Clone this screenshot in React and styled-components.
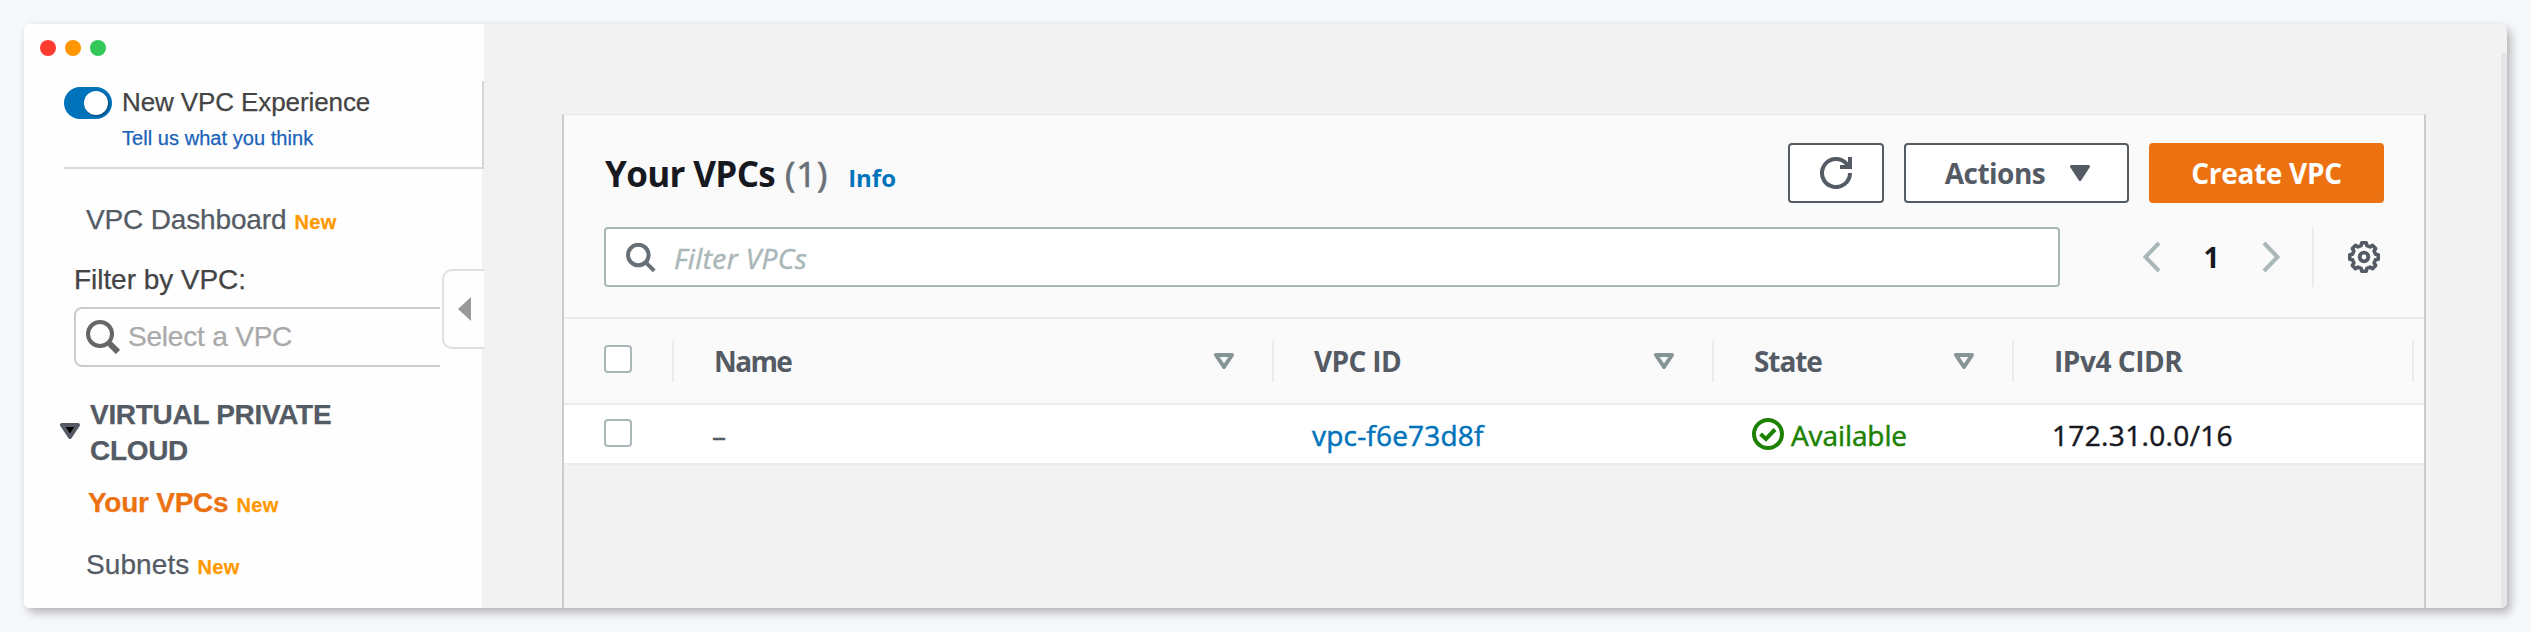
import React from 'react';
import styled, { createGlobalStyle, css } from 'styled-components';

const ember = '"Open Sans", "Noto Sans", sans-serif';
const helvetica = '"Liberation Sans", Arial, sans-serif';

const GlobalStyle = createGlobalStyle`
  * { box-sizing: border-box; }
  body { margin: 0; background: #f7f8fb; }
  button { font: inherit; }
  svg { display: block; flex: none; }
`;

const Page = styled.div`
  height: 632px;
  padding: 24px;
  overflow: hidden;
  background: #f7f8fb;
`;

const Window = styled.div`
  display: flex;
  width: 2483px;
  height: 584px;
  border-radius: 6px;
  background: #f2f2f2;
  box-shadow: 4px 5px 10px rgba(0, 0, 0, 0.26), 0 0 6px rgba(0, 0, 0, 0.04);
`;

/* ---------- sidebar ---------- */

const Sidebar = styled.aside`
  position: relative;
  width: 458px;
  flex: none;
  background: #fefefe;
  border-radius: 6px 0 0 6px;
  font-family: ${helvetica};
  color: #545b64;
  -webkit-text-stroke: 0.25px;
`;

const TitleBar = styled.div`
  display: flex;
  gap: 9px;
  width: 460px;
  height: 57px;
  padding: 16px 0 0 16px;
  background: #fefefe;
  border-top-left-radius: 6px;
`;

const Dot = styled.span`
  width: 16px;
  height: 16px;
  border-radius: 50%;
  background: ${(p) => p.$color};
`;

const Experience = styled.div`
  display: flex;
  gap: 10px;
  width: 420px;
  height: 88px;
  margin-left: 40px;
  padding-top: 6px;
  background: #fefefe;
  border-right: 2px solid #d5d5d5;
  border-bottom: 2px solid #d9d9d9;
`;

const Toggle = styled.span`
  display: flex;
  justify-content: flex-end;
  width: 48px;
  height: 32px;
  padding: 4px;
  border-radius: 16px;
  background: #0073bb;
`;

const Knob = styled.span`
  width: 24px;
  height: 24px;
  border-radius: 50%;
  background: #fff;
  box-shadow: 1px 1px 2px rgba(0, 0, 0, 0.45);
`;

const ExperienceTitle = styled.div`
  font-size: 26px;
  line-height: 30px;
  letter-spacing: -0.1px;
  color: #444;
`;

const FeedbackLink = styled.div`
  margin-top: 9px;
  font-size: 20px;
  line-height: 24px;
  letter-spacing: 0.05px;
  color: #1a62b8;
`;

const SidebarItem = styled.div`
  display: flex;
  align-items: baseline;
  gap: 8px;
  height: 36px;
  margin-top: ${(p) => p.$top}px;
  padding-left: 62px;
  font-size: 28px;
  line-height: 36px;
  letter-spacing: ${(p) => p.$tracking || 0}px;
  ${(p) =>
    p.$active &&
    css`
      padding-left: 64px;
      font-weight: 700;
      color: #ec7211;
    `}
`;

const NewTag = styled.span`
  font-size: 20px;
  font-weight: 700;
  letter-spacing: 0.4px;
  color: #ff9900;
`;

const FilterLabel = styled.div`
  margin: 24px 0 9px 50px;
  font-size: 28px;
  line-height: 36px;
  letter-spacing: -0.05px;
  color: #444;
`;

const VpcSelect = styled.div`
  display: flex;
  align-items: center;
  gap: 8px;
  width: 366px;
  height: 60px;
  margin-left: 50px;
  padding-left: 10px;
  border: 2px solid #ccc;
  border-right: 0;
  border-radius: 8px 0 0 8px;
  font-size: 28px;
  line-height: 36px;
  letter-spacing: -0.2px;
  color: #aaa;
`;

const Group = styled.div`
  display: flex;
  align-items: center;
  gap: 10px;
  margin-top: 30px;
  padding-left: 36px;
`;

const GroupTitle = styled.div`
  width: 260px;
  font-size: 28px;
  font-weight: 700;
  line-height: 36px;
  letter-spacing: -0.3px;
`;

const CollapseTab = styled.div`
  position: absolute;
  top: 245px;
  right: -2px;
  display: flex;
  align-items: center;
  width: 42px;
  height: 80px;
  padding-left: 14px;
  background: #fefefe;
  border: 2px solid #e0e0e0;
  border-right: 0;
  border-radius: 10px 0 0 10px;
`;

/* ---------- main area ---------- */

const Main = styled.main`
  flex: 1;
  display: flex;
  padding: 90px 75px 0 80px;
  font-family: ${ember};
  font-size: 28px;
  line-height: 36px;
`;

const ScrollTrack = styled.div`
  width: 6px;
  margin-top: 29px;
  background: #e4e6e7;
  border-bottom-right-radius: 6px;
`;

const Panel = styled.section`
  flex: 1;
  border: 2px solid #c9cdd1;
  border-top: 1px solid #e4e7ea;
  border-bottom: 0;
`;

const PanelHeader = styled.header`
  display: flex;
  flex-direction: column;
  gap: 24px;
  height: 204px;
  padding: 28px 40px 0;
  background: #fafafa;
  border-bottom: 2px solid #eaeded;
`;

const HeaderRow = styled.div`
  display: flex;
  align-items: center;
  height: 60px;
`;

const Heading = styled.h2`
  display: flex;
  align-items: baseline;
  flex: 1;
  margin: 0;
  padding: 5px 0 0 1px;
  font-size: 35px;
  line-height: 48px;
  letter-spacing: -0.65px;
  color: #16191f;
`;

const Count = styled.span`
  margin-left: 10px;
  font-weight: 400;
  letter-spacing: 0.8px;
  color: #687078;
  -webkit-text-stroke: 0.7px;
`;

const InfoLink = styled.span`
  margin-left: 20px;
  font-size: 24px;
  letter-spacing: 0;
  color: #0073bb;
`;

const Button = styled.button`
  display: flex;
  align-items: center;
  justify-content: center;
  gap: 25px;
  width: ${(p) => p.$width}px;
  height: 60px;
  margin-left: 20px;
  padding: 0;
  border: 2px solid ${(p) => (p.$primary ? '#ec7211' : '#545b64')};
  border-radius: 4px;
  background: ${(p) => (p.$primary ? '#ec7211' : '#fff')};
  color: ${(p) => (p.$primary ? '#fff' : '#545b64')};
  font-weight: 700;
  letter-spacing: ${(p) => (p.$primary ? -0.3 : -0.5)}px;
`;

const Caret = styled.svg`
  margin-right: -2px;
`;

const FilterBox = styled.div`
  display: flex;
  align-items: center;
  gap: 18px;
  width: 1456px;
  height: 60px;
  padding: 1px 0 0 20px;
  border: 2px solid #aab7b8;
  border-radius: 4px;
  background: #fff;
  font-style: italic;
  letter-spacing: 0.4px;
  color: #aab7b8;
  -webkit-text-stroke: 0.5px;
`;

const Pager = styled.div`
  display: flex;
  align-items: center;
  justify-content: space-between;
  width: 137px;
  margin-left: 83px;
  font-weight: 700;
  color: #16191f;
`;

const Settings = styled.div`
  display: flex;
  align-items: center;
  justify-content: flex-end;
  width: 72px;
  height: 60px;
  margin-left: auto;
  padding-right: 4px;
  border-left: 2px solid #eaeded;
`;

const Row = styled.div`
  display: grid;
  grid-template-columns: 110px 600px 440px 300px 400px;
  align-items: center;
  height: ${(p) => (p.$head ? 86 : 60)}px;
  padding-bottom: ${(p) => (p.$head ? 0 : 1)}px;
  background: ${(p) => (p.$head ? '#fafafa' : '#fff')};
  border-bottom: 2px solid #eaeded;
`;

const HeadCell = styled.div`
  display: flex;
  align-items: center;
  justify-content: space-between;
  height: 42px;
  padding: 0 38px 0 40px;
  border-right: 2px solid #eaeded;
  font-weight: 700;
  letter-spacing: ${(p) => p.$tracking || 0}px;
  color: #545b64;
`;

const Cell = styled.div`
  display: flex;
  align-items: center;
  gap: 7px;
  padding-left: 38px;
  letter-spacing: ${(p) => p.$tracking || 0}px;
  color: ${(p) => p.$color || '#16191f'};
  -webkit-text-stroke: 0.5px;
`;

const CellText = styled.span`
  padding-top: 2px;
`;

const Checkbox = styled.span`
  width: 28px;
  height: 28px;
  margin: 0 0 ${(p) => (p.$raised ? 4 : 1)}px ${(p) => (p.$raised ? 0 : 2)}px;
  border: 2px solid #aab7b8;
  border-radius: 4px;
  background: #fff;
`;

/* ---------- icons ---------- */

const SidebarSearchIcon = () => (
  <svg width="34" height="34" viewBox="0 0 34 34" fill="none" stroke="#666">
    <circle cx="14" cy="14" r="12" strokeWidth="4" />
    <path d="M23.5 23.5L32 32" strokeWidth="6" />
  </svg>
);

const SearchIcon = () => (
  <svg width="30" height="30" viewBox="0 0 30 30" fill="none" stroke="#687078" strokeWidth="4">
    <circle cx="12.3" cy="12" r="10.3" />
    <path d="M19.7 19.4L28.2 27.8" />
  </svg>
);

const RefreshIcon = () => (
  <svg width="32" height="32" viewBox="0 0 32 32" fill="none" stroke="#545b64" strokeWidth="4">
    <path d="M30 16A14 14 0 1 1 26.8 7.1L29.5 9.5" />
    <path d="M30 0V10H20" />
  </svg>
);

const CaretIcon = () => (
  <Caret width="20" height="16" viewBox="0 0 20 16">
    <path d="M1.5 1.5H18.5L10 14.5Z" fill="#545b64" stroke="#545b64" strokeWidth="3" strokeLinejoin="round" />
  </Caret>
);

const SortIcon = () => (
  <svg width="20" height="16" viewBox="0 0 20 16">
    <path d="M2 2H18L10 14Z" fill="none" stroke="#879596" strokeWidth="4" strokeLinejoin="round" />
  </svg>
);

const GroupCaret = () => (
  <svg width="20" height="20" viewBox="0 0 20 20">
    <path d="M2 2H18L10 14Z" fill="#000" stroke="#545b64" strokeWidth="4" strokeLinejoin="round" />
  </svg>
);

const Chevron = ({ next }) => (
  <svg width="18" height="32" viewBox="0 0 18 32" fill="none" stroke="#aab7b8" strokeWidth="4">
    <path d={next ? 'M2 2L15.5 16L2 30' : 'M16 2L2.5 16L16 30'} />
  </svg>
);

const StatusIcon = () => (
  <svg width="32" height="32" viewBox="0 0 32 32" fill="none" stroke="#1d8102" strokeWidth="4">
    <circle cx="16" cy="16" r="14" />
    <path d="M8.5 16L14 21L23 11.5" />
  </svg>
);

const gearPath = Array.from({ length: 8 }, (_, i) => {
  const point = (r, deg) => {
    const a = ((i * 45 + deg) * Math.PI) / 180;
    return `${(16 + r * Math.cos(a)).toFixed(2)} ${(16 + r * Math.sin(a)).toFixed(2)}`;
  };
  return `${i ? 'L' : 'M'}${point(11.8, -14)}L${point(14.4, -9)}L${point(14.4, 9)}L${point(11.8, 14)}`;
}).join('') + 'Z';

const GearIcon = () => (
  <svg width="32" height="32" viewBox="0 0 32 32" fill="none" stroke="#545b64" strokeLinejoin="round">
    <path d={gearPath} strokeWidth="3.6" />
    <circle cx="16" cy="16" r="4.3" strokeWidth="3.8" />
  </svg>
);

const columns = [
  { label: 'Name', tracking: -1.6, sortable: true },
  { label: 'VPC ID', tracking: -0.65, sortable: true },
  { label: 'State', tracking: -1.1, sortable: true },
  { label: 'IPv4 CIDR', tracking: -0.45 },
];

export default function App() {
  return (
    <Page>
      <GlobalStyle />
      <Window>
        <Sidebar>
          <TitleBar>
            <Dot $color="#ff3b30" />
            <Dot $color="#ff9500" />
            <Dot $color="#34c759" />
          </TitleBar>
          <Experience>
            <Toggle>
              <Knob />
            </Toggle>
            <div>
              <ExperienceTitle>New VPC Experience</ExperienceTitle>
              <FeedbackLink>Tell us what you think</FeedbackLink>
            </div>
          </Experience>
          <SidebarItem $top={33} $tracking={-0.15}>
            VPC Dashboard <NewTag>New</NewTag>
          </SidebarItem>
          <FilterLabel>Filter by VPC:</FilterLabel>
          <VpcSelect>
            <SidebarSearchIcon />
            Select a VPC
          </VpcSelect>
          <Group>
            <GroupCaret />
            <GroupTitle>VIRTUAL PRIVATE CLOUD</GroupTitle>
          </Group>
          <SidebarItem $top={16} $tracking={-0.25} $active>
            Your VPCs <NewTag>New</NewTag>
          </SidebarItem>
          <SidebarItem $top={26} $tracking={0.1}>
            Subnets <NewTag>New</NewTag>
          </SidebarItem>
          <CollapseTab>
            <svg width="13" height="24" viewBox="0 0 13 24">
              <path d="M13 0V24L0 12Z" fill="#999" />
            </svg>
          </CollapseTab>
        </Sidebar>
        <Main>
          <Panel>
            <PanelHeader>
              <HeaderRow>
                <Heading>
                  Your VPCs <Count>(1)</Count> <InfoLink>Info</InfoLink>
                </Heading>
                <Button $width={96} aria-label="Refresh">
                  <RefreshIcon />
                </Button>
                <Button $width={225}>
                  Actions <CaretIcon />
                </Button>
                <Button $width={235} $primary>
                  Create VPC
                </Button>
              </HeaderRow>
              <HeaderRow>
                <FilterBox>
                  <SearchIcon />
                  Filter VPCs
                </FilterBox>
                <Pager>
                  <Chevron />
                  <span>1</span>
                  <Chevron next />
                </Pager>
                <Settings>
                  <GearIcon />
                </Settings>
              </HeaderRow>
            </PanelHeader>
            <Row $head>
              <HeadCell>
                <Checkbox $raised />
              </HeadCell>
              {columns.map((c) => (
                <HeadCell key={c.label} $tracking={c.tracking}>
                  {c.label}
                  {c.sortable && <SortIcon />}
                </HeadCell>
              ))}
            </Row>
            <Row>
              <Cell>
                <Checkbox />
              </Cell>
              <Cell $color="#545b64">
                <CellText>–</CellText>
              </Cell>
              <Cell $color="#0073bb" $tracking={0.2}>
                <CellText>vpc-f6e73d8f</CellText>
              </Cell>
              <Cell $color="#1d8102" $tracking={-0.1}>
                <StatusIcon />
                <CellText>Available</CellText>
              </Cell>
              <Cell $tracking={0.35}>
                <CellText>172.31.0.0/16</CellText>
              </Cell>
            </Row>
          </Panel>
        </Main>
        <ScrollTrack />
      </Window>
    </Page>
  );
}
